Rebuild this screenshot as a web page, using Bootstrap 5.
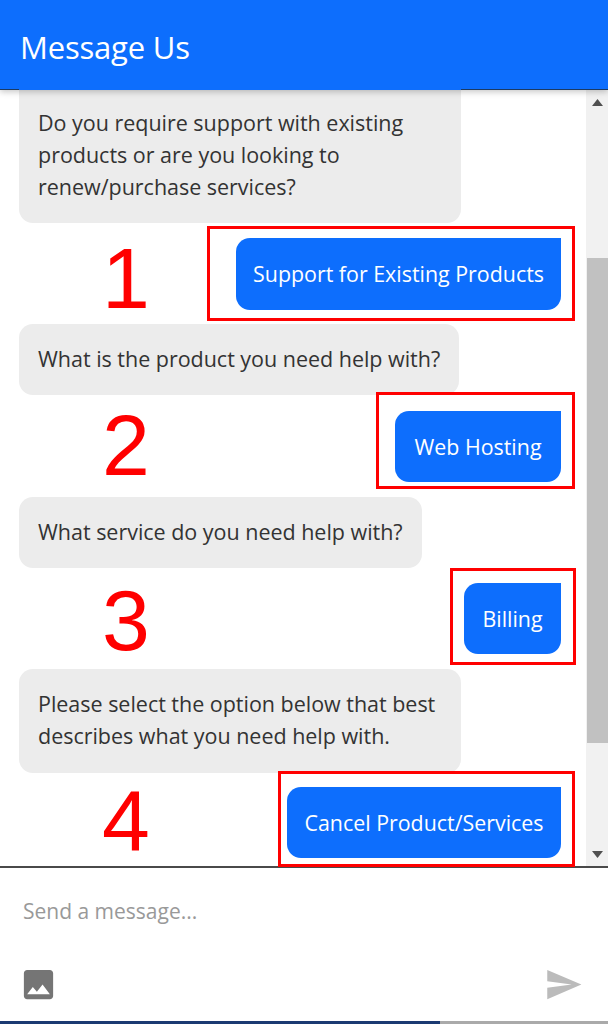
<!doctype html>
<html lang="en">
<head>
<meta charset="utf-8">
<title>Message Us</title>
<link href="https://cdn.jsdelivr.net/npm/bootstrap@5.3.0/dist/css/bootstrap.min.css" rel="stylesheet">
<style>
html, body { height: 100%; }
body { width: 608px; height: 1024px; overflow: hidden; background: #fff; font-family: "Open Sans", "Noto Sans", sans-serif; color: #333; }
.shell { height: 1024px; }
.top-bar { height: 90px; flex: none; padding: 6px 20px 0; border-bottom: 1px solid #1b3a63; box-shadow: 0 2px 6px rgba(0,0,0,.22); z-index: 2; position: relative; }
.top-bar::after { content: ""; position: absolute; left: 19px; width: 442px; bottom: -1px; height: 1px; background: #0d6efd; }
.top-bar .navbar-brand { font-size: 31px; color: #fff; padding: 0; margin: 0; letter-spacing: -.2px; }
.chat-area { height: 776px; flex: none; }
.chat-list { width: 586px; padding: 0 25px 0 19px; }
.bubble { background: #ececec; border-radius: 14px; padding: 19px 0 0 19px; font-size: 21.5px; line-height: 32px; color: #333; letter-spacing: -.02px; }
.bubble-first { border-radius: 0 0 14px 14px; padding-top: 17px; height: 133px; width: 442px; margin-bottom: 15px; }
.bubble-two { height: 71px; width: 440px; margin-bottom: 16px; }
.bubble-three { height: 71px; width: 403px; margin-bottom: 15px; }
.bubble-four { height: 104px; width: 442px; margin-bottom: 14px; }
.reply-row { position: relative; display: flex; justify-content: flex-end; height: 71px; }
.reply-row-tall { height: 72px; margin-bottom: 14px; }
.reply-gap-b { margin-bottom: 15px; }
.reply-gap-c { margin-bottom: 15px; }
.reply-btn { position: relative; height: 100%; font-size: 21.4px; line-height: 1; padding: 0 10px; background: #0d6efd; border: 0; color: #fff; border-radius: 14px 0 14px 14px; }
.w-one { width: 325px; }
.w-two { width: 166px; }
.w-three { width: 97px; }
.w-four { width: 274px; }
.mark-box { position: absolute; border: 3px solid #f00; pointer-events: none; }
.box-one { top: -12px; bottom: -11px; left: -29px; right: -14px; }
.box-two { top: -19px; bottom: -7px; left: -19px; right: -14px; }
.box-three { top: -15px; bottom: -11px; left: -14px; right: -15px; }
.box-four { top: -16px; bottom: -9px; left: -9px; right: -14px; }
.mark-num { position: absolute; left: 83px; font-family: "Liberation Sans", Arial, sans-serif; font-size: 86px; line-height: 1; color: #f00; width: 48px; text-align: center; }
.num-one { top: -3px; }
.num-two { top: -9px; }
.num-three { top: -6px; }
.num-four { top: -10px; }
.bar-col { width: 22px; flex: none; background: #f1f1f1; }
.bar-arrow { height: 24px; flex: none; }
.bar-track-top { height: 144px; flex: none; }
.bar-thumb { height: 485px; flex: none; margin-left: 1px; background: #c1c1c1; }
.bar-track-end { flex: 1 1 auto; }
.composer { flex: 1 1 auto; border-top: 2px solid #4a4a4a; padding: 0 25px 0 19px; }
.composer-field { height: 97px; flex: none; padding: 26px 0 0 4px; font-size: 21px; line-height: 34px; color: #999; }
.ico { width: 39px; height: 39px; display: block; }
.ico-pic { fill: #757575; }
.ico-send { fill: #bbb; }
.foot-strip { height: 3px; flex: none; background: #aaa; margin: auto 0 0; }
.foot-strip-fill { width: 440px; height: 3px; background: #1b3a72; }
</style>
</head>
<body>
<div class="shell d-flex flex-column">
  <header class="navbar bg-primary top-bar">
    <span class="navbar-brand">Message Us</span>
  </header>
  <div class="chat-area d-flex">
    <div class="chat-list flex-grow-1">
      <div class="bubble bubble-first">Do you require support with existing products or are you looking to renew/purchase services?</div>
      <div class="reply-row reply-row-tall">
        <span class="mark-num num-one">1</span>
        <button type="button" class="btn reply-btn w-one">Support for Existing Products<span class="mark-box box-one"></span></button>
      </div>
      <div class="bubble bubble-two">What is the product you need help with?</div>
      <div class="reply-row reply-gap-b">
        <span class="mark-num num-two">2</span>
        <button type="button" class="btn reply-btn w-two">Web Hosting<span class="mark-box box-two"></span></button>
      </div>
      <div class="bubble bubble-three">What service do you need help with?</div>
      <div class="reply-row reply-gap-c">
        <span class="mark-num num-three">3</span>
        <button type="button" class="btn reply-btn w-three">Billing<span class="mark-box box-three"></span></button>
      </div>
      <div class="bubble bubble-four">Please select the option below that best describes what you need help with.</div>
      <div class="reply-row">
        <span class="mark-num num-four">4</span>
        <button type="button" class="btn reply-btn w-four">Cancel Product/Services<span class="mark-box box-four"></span></button>
      </div>
    </div>
    <div class="bar-col d-flex flex-column">
      <div class="bar-arrow d-flex justify-content-center align-items-center"><svg width="11" height="7" viewBox="0 0 11 7"><path d="M5.5 0 11 7H0z" fill="#505050"/></svg></div>
      <div class="bar-track-top"></div>
      <div class="bar-thumb"></div>
      <div class="bar-track-end d-flex justify-content-center align-items-end pb-2"><svg width="11" height="7" viewBox="0 0 11 7"><path d="M0 0h11L5.5 7z" fill="#505050"/></svg></div>
    </div>
  </div>
  <div class="composer d-flex flex-column">
    <div class="composer-field">Send a message...</div>
    <div class="d-flex justify-content-between">
      <svg class="ico ico-pic" viewBox="0 0 24 24"><path d="M21 19V5c0-1.1-.9-2-2-2H5c-1.1 0-2 .9-2 2v14c0 1.1.9 2 2 2h14c1.1 0 2-.9 2-2zM8.5 13.5l2.5 3.01L14.5 12l4.5 6H5l3.5-4.5z"/></svg>
      <svg class="ico ico-send" viewBox="0 0 24 24"><path d="M2.01 21 23 12 2.01 3 2 10l15 2-15 2z"/></svg>
    </div>
  </div>
  <div class="foot-strip"><div class="foot-strip-fill"></div></div>
</div>
<script src="https://cdn.jsdelivr.net/npm/bootstrap@5.3.0/dist/js/bootstrap.bundle.min.js"></script>
</body>
</html>
